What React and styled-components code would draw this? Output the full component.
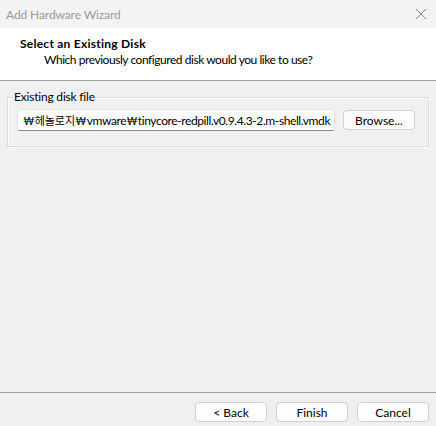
import React from "react";
import styled, { createGlobalStyle } from "styled-components";

const FONT = `Lato, "Noto Sans CJK KR", sans-serif`;

const Global = createGlobalStyle`
  html, body { margin: 0; padding: 0; }
  body {
    background: #f0f0f0;
    font-family: ${FONT};
    font-size: 12px;
    color: #000;
  }
`;

const Window = styled.div`
  width: 436px;
  height: 426px;
  display: flex;
  flex-direction: column;
  background: #f0f0f0;
  overflow: hidden;
`;

const TitleBar = styled.div`
  height: 28px;
  display: flex;
  align-items: center;
  justify-content: space-between;
  padding: 0 8px 0 6px;
  background: #f3f3f3;
  color: #9a9a9a;
  font-size: 12px;
  letter-spacing: -0.1px;
`;

const CloseBtn = styled.div`
  width: 14px;
  height: 14px;
  display: flex;
  align-items: center;
  justify-content: center;
`;

const Header = styled.div`
  height: 53px;
  background: #fff;
  border-bottom: 1px solid #a0a0a0;
  padding: 8px 0 0 20px;
  box-sizing: border-box;
`;

const HeaderTitle = styled.div`
  font-weight: bold;
  line-height: 16px;
  letter-spacing: 0.25px;
`;

const HeaderSub = styled.div`
  line-height: 16px;
  padding-left: 24px;
  letter-spacing: -0.45px;
`;

const Body = styled.div`
  flex: 1;
  padding: 9px 7px 0 7px;
`;

const Group = styled.fieldset`
  margin: 0;
  padding: 5px 13px 15px 9px;
  border: 1px solid #dcdcdc;
  box-shadow: 1px 1px 0 #fff inset, 1px 1px 0 #fff;
  border-radius: 0;
`;

const Legend = styled.legend`
  padding: 0 1px;
  margin-left: -4px;
  font-size: 12px;
  line-height: 14px;
  letter-spacing: -0.2px;
`;

const Row = styled.div`
  display: flex;
  align-items: center;
  gap: 8px;
`;

const Input = styled.div`
  width: 318px;
  height: 22px;
  box-sizing: border-box;
  background: #fff;
  border: 1px solid #e3e3e3;
  border-bottom-color: #8a8a8a;
  border-radius: 3px;
  padding: 0 0 0 5px;
  display: flex;
  align-items: center;
  white-space: nowrap;
  overflow: hidden;
  letter-spacing: -0.4px;
`;

const Korean = styled.span`
  font-size: 11px;
  letter-spacing: 0;
`;

const Button = styled.button`
  width: ${(p) => p.$w || 72}px;
  height: ${(p) => p.$h || 20}px;
  background: #fdfdfd;
  border: 1px solid #d0d0d0;
  border-radius: 4px;
  font-family: ${FONT};
  font-size: 12px;
  color: #000;
  padding: 0;
  display: flex;
  align-items: center;
  justify-content: center;
`;

const Footer = styled.div`
  height: 34px;
  box-sizing: border-box;
  border-top: 1px solid #a0a0a0;
  display: flex;
  justify-content: flex-end;
  align-items: flex-start;
  padding: 9px 7px 0 0;
  gap: 9px;
`;

export default function App() {
  return (
    <>
      <Global />
      <Window>
        <TitleBar>
          <span>Add Hardware Wizard</span>
          <CloseBtn>
            <svg width="12" height="12" viewBox="0 0 12 12">
              <path d="M1 1L11 11M11 1L1 11" stroke="#8a8a8a" strokeWidth="1" fill="none" />
            </svg>
          </CloseBtn>
        </TitleBar>
        <Header>
          <HeaderTitle>Select an Existing Disk</HeaderTitle>
          <HeaderSub>Which previously configured disk would you like to use?</HeaderSub>
        </Header>
        <Body>
          <Group>
            <Legend>Existing disk file</Legend>
            <Row>
              <Input>
                <Korean>₩헤놀로지₩</Korean>vmware<Korean>₩</Korean>tinycore-redpill.v0.9.4.3-2.m-shell.vmdk
              </Input>
              <Button>Browse...</Button>
            </Row>
          </Group>
        </Body>
        <Footer>
          <Button>&lt; Back</Button>
          <Button>Finish</Button>
          <Button>Cancel</Button>
        </Footer>
      </Window>
    </>
  );
}
